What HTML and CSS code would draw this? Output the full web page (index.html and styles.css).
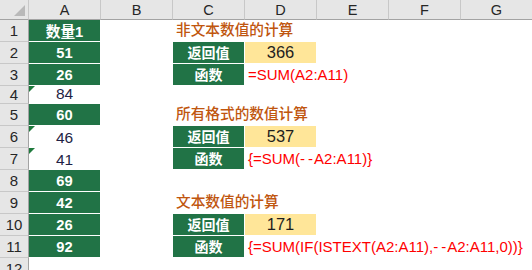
FILE: index.html
```html
<!DOCTYPE html>
<html>
<head>
<meta charset="utf-8">
<link rel="stylesheet" href="styles.css">
</head>
<body>
<div class="sheet">
  <div class="corner"><svg width="11" height="11" viewBox="0 0 11 11"><polygon points="11,0 11,11 0,11" fill="#b9b9b9"/></svg></div>
  <div class="ch">A</div><div class="ch">B</div><div class="ch">C</div><div class="ch">D</div><div class="ch">E</div><div class="ch">F</div><div class="ch">G</div>

  <div class="rh">1</div>
  <div class="c g num">数量1</div><div class="c"></div><div class="c title">非文本数值的计算</div><div class="c"></div><div class="c"></div><div class="c"></div><div class="c"></div>

  <div class="rh">2</div>
  <div class="c g num">51</div><div class="c"></div><div class="c g lbl">返回值</div><div class="c y">366</div><div class="c"></div><div class="c"></div><div class="c"></div>

  <div class="rh">3</div>
  <div class="c g num">26</div><div class="c"></div><div class="c g lbl">函数</div><div class="c f">=SUM(A2:A11)</div><div class="c"></div><div class="c"></div><div class="c"></div>

  <div class="rh short">4</div>
  <div class="c tx">84</div><div class="c"></div><div class="c"></div><div class="c"></div><div class="c"></div><div class="c"></div><div class="c"></div>

  <div class="rh">5</div>
  <div class="c g num">60</div><div class="c"></div><div class="c title">所有格式的数值计算</div><div class="c"></div><div class="c"></div><div class="c"></div><div class="c"></div>

  <div class="rh">6</div>
  <div class="c tx">46</div><div class="c"></div><div class="c g lbl">返回值</div><div class="c y">537</div><div class="c"></div><div class="c"></div><div class="c"></div>

  <div class="rh">7</div>
  <div class="c tx">41</div><div class="c"></div><div class="c g lbl">函数</div><div class="c f">{=SUM(<span class="dd">-</span><span class="dd2">-</span>A2:A11)}</div><div class="c"></div><div class="c"></div><div class="c"></div>

  <div class="rh">8</div>
  <div class="c g num">69</div><div class="c"></div><div class="c"></div><div class="c"></div><div class="c"></div><div class="c"></div><div class="c"></div>

  <div class="rh">9</div>
  <div class="c g num">42</div><div class="c"></div><div class="c title">文本数值的计算</div><div class="c"></div><div class="c"></div><div class="c"></div><div class="c"></div>

  <div class="rh">10</div>
  <div class="c g num">26</div><div class="c"></div><div class="c g lbl">返回值</div><div class="c y">171</div><div class="c"></div><div class="c"></div><div class="c"></div>

  <div class="rh">11</div>
  <div class="c g num">92</div><div class="c"></div><div class="c g lbl">函数</div><div class="c f">{=SUM(IF(ISTEXT(A2:A11),<span class="dd">-</span><span class="dd2">-</span>A2:A11,0))}</div><div class="c"></div><div class="c"></div><div class="c"></div>

  <div class="rh">12</div>
  <div class="c"></div><div class="c"></div><div class="c"></div><div class="c"></div><div class="c"></div><div class="c"></div><div class="c"></div>
</div>
</body>
</html>
```

FILE: styles.css
```css
html, body {
  margin: 0;
  padding: 0;
  background: #ffffff;
  overflow: hidden;
}
body {
  font-family: "Liberation Sans", "Noto Sans CJK SC", sans-serif;
  width: 532px;
  height: 270px;
}
.sheet {
  display: grid;
  grid-template-columns: 29px repeat(7, 72px);
  grid-template-rows: 20px 22px 22px 22px 18px 22px 22px 22px 22px 22px 22px 22px 22px;
  width: 533px;
}
.corner {
  background: #e6e6e6;
  border-right: 1px solid #c8c8c8;
  border-bottom: 1px solid #a3a3a3;
  box-sizing: border-box;
  display: flex;
  align-items: flex-end;
  justify-content: flex-end;
  padding: 0 3px 3px 0;
}
.ch {
  background: #e6e6e6;
  border-right: 1px solid #c8c8c8;
  border-bottom: 1px solid #a3a3a3;
  box-sizing: border-box;
  display: flex;
  align-items: center;
  justify-content: center;
  font-size: 14.5px;
  color: #262626;
  padding-top: 1px;
}
.rh {
  background: #e6e6e6;
  border-right: 1px solid #a3a3a3;
  border-bottom: 1px solid #c8c8c8;
  box-sizing: border-box;
  display: flex;
  align-items: flex-end;
  justify-content: center;
  font-size: 15px;
  color: #262626;
  line-height: 18px;
  padding-bottom: 1px;
}
.rh.short {
  line-height: 16px;
  padding-bottom: 0;
}
.c {
  border-right: 1px solid #ffffff;
  border-bottom: 1px solid #ffffff;
  box-sizing: border-box;
  display: flex;
  position: relative;
  white-space: nowrap;
  min-width: 0;
}
.g {
  background: #217346;
  color: #ffffff;
  font-weight: bold;
  align-items: center;
  justify-content: center;
}
.num {
  font-size: 14.7px;
}
.lbl {
  font-size: 14px;
  padding-bottom: 1px;
}
.y {
  background: #ffe699;
  color: #1e1e1e;
  font-size: 16.5px;
  align-items: flex-end;
  justify-content: center;
  line-height: 20px;
  padding-bottom: 1px;
}
.title {
  color: #c0560f;
  font-size: 14.67px;
  font-weight: 500;
  align-items: flex-end;
  line-height: 18px;
  padding-left: 3px;
  padding-bottom: 2px;
  overflow: visible;
  z-index: 1;
}
.f {
  color: #ff0000;
  font-size: 15px;
  align-items: flex-end;
  padding-left: 3px;
  line-height: 18px;
  padding-bottom: 1px;
  overflow: visible;
  z-index: 1;
}
.dd {
  letter-spacing: 3px;
}
.dd2 {
  letter-spacing: 1px;
}
.tx {
  color: #1f1f45;
  font-size: 15.5px;
  align-items: flex-end;
  justify-content: center;
  line-height: 17px;
  padding-bottom: 1px;
}
.tx::before {
  content: "";
  position: absolute;
  left: 0;
  top: 0;
  width: 0;
  height: 0;
  border-top: 6px solid #1e7a3c;
  border-right: 6px solid transparent;
}
```
